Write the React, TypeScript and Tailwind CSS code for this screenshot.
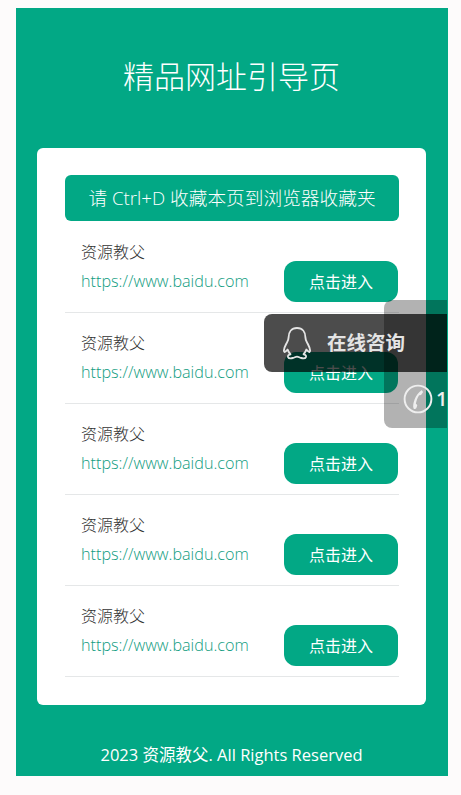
const rows = [0, 1, 2, 3, 4];

function QQIcon() {
  return (
    <svg className="shrink-0" width="30" height="34" viewBox="0 0 32 36" fill="none" stroke="#e4e4e4" strokeWidth="2" strokeLinejoin="round" strokeLinecap="round">
      <path d="M16 2c-6 0-9 4.500-9 10 0 2-.5 3-1.500 5C4 20 2 23 2 26c0 1.500 1 2 2 1l2-2c.5 2 1.500 3.500 3 5-2 .5-3 1.500-2.500 3 .5 1.300 3 1.500 5 1 2-.5 3-1.500 4.500-1.500S18.500 33.500 20.500 34c2 .5 4.500.3 5-1 .5-1.500-.5-2.500-2.500-3 1.500-1.500 2.500-3 3-5l2 2c1 1 2 .5 2-1 0-3-2-6-3.500-9-1-2-1.500-3-1.500-5C25 6.500 22 2 16 2z" />
    </svg>
  );
}

function PhoneIcon() {
  return (
    <svg className="shrink-0" width="30" height="30" viewBox="0 0 28 28" fill="none" stroke="#eeeeee" strokeWidth="2">
      <circle cx="14" cy="14" r="12.500" strokeWidth="1.800" />
      <path d="M17 5.500c1 .5 2 1.500 1.500 2.500l-1.500 2c-.5.500-1.500.300-2 .500-1.500 2.500-2.500 5-3 8 .5.500 1.300.800 1.300 1.500l-.8 2.500c-.5 1-2 1-2.500.500-1-1.500-.5-5 .8-8.500 1.300-3.500 3.700-7 6.700-9z" fill="#eeeeee" stroke="none" />
    </svg>
  );
}

export default function App() {
  return (
    <div className="relative h-[795px] w-[461px] overflow-hidden bg-[#fdfbfb] pt-2 font-['Open_Sans','Noto_Sans_CJK_SC',sans-serif] font-light">
      <div className="mx-4 flex h-[768px] w-[432px] flex-col items-center bg-[#02a885] pl-[21px] pr-[22px]">
        <h1 className="mt-[44px] text-[31px] leading-[48px] font-light text-white">精品网址引导页</h1>
        <div className="mt-[48px] flex h-[557px] w-[389px] flex-col rounded-md bg-white pr-[27px] pl-7 pt-[27px]">
          <div className="mb-px flex h-[46px] shrink-0 items-center justify-center rounded-md bg-[#02a885] text-[18.700px] text-white">
            请 Ctrl+D 收藏本页到浏览器收藏夹
          </div>
          {rows.map((r) => (
            <div key={r} className="flex h-[91px] shrink-0 items-end justify-between border-b border-[#e5e7e8] pr-px pb-[10px]">
              <div className="pb-[9px] pl-4">
                <div className="text-[16px] leading-[24px] text-[#333333]">资源教父</div>
                <div className="mt-[5px] text-[16.200px] leading-[24px] text-[#109c80]">https://www.baidu.com</div>
              </div>
              <div className="flex h-[41px] w-[114px] items-center justify-center rounded-[12px] bg-[#02a885] text-[16px] font-normal text-white">
                点击进入
              </div>
            </div>
          ))}
        </div>
        <div className="mt-[38px] text-[16.500px] leading-6 font-medium text-white">
          2023 <span className="font-normal">资源教父</span>. All Rights Reserved
        </div>
      </div>

      <div className="absolute top-[300px] left-[384px] flex h-[128px] w-[63px] items-end overflow-hidden rounded-l-lg bg-black/30 pb-[14px] pl-[19px]">
        <PhoneIcon />
        <span className="ml-[3px] text-[20px] leading-[30px] font-semibold whitespace-nowrap text-[#eeeeee]">19</span>
      </div>
      <div className="absolute top-[314px] left-[264px] flex h-[58px] w-[183px] items-center rounded-l-lg bg-black/70 pl-[18px]">
        <QQIcon />
        <span className="ml-[15px] text-[19.500px] font-bold text-[#e4e4e4]">在线咨询</span>
      </div>
    </div>
  );
}
